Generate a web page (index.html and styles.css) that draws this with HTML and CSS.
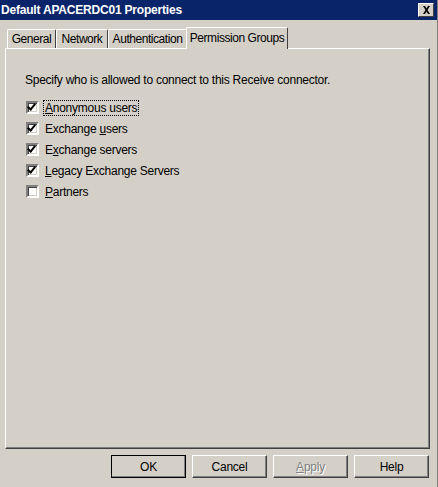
FILE: index.html
```html
<!DOCTYPE html>
<html lang="en">
<head>
  <meta charset="UTF-8">
  <title>Default APACERDC01 Properties</title>
  <link rel="stylesheet" href="styles.css">
</head>
<body>
  <div class="window">
    <div class="titlebar">
      <span class="title">Default APACERDC01 Properties</span>
      <button class="close">
        <svg width="9" height="8" viewBox="0 0 9 8"><path d="M1 0h2l1.5 2.5L6 0h2L5.5 4 8 8H6L4.5 5.5 3 8H1l2.5-4z" fill="#000"/></svg>
      </button>
    </div>

    <div class="tabs">
      <div class="tab tab-general">General</div>
      <div class="tab tab-network">Network</div>
      <div class="tab tab-auth">Authentication</div>
      <div class="tab active">Permission Groups</div>
    </div>

    <div class="panel">
      <p class="intro">Specify who is allowed to connect to this Receive connector.</p>
      <ul class="checks">
        <li><span class="box checked"></span><span class="label focus"><u>A</u>nonymous users</span></li>
        <li><span class="box checked"></span><span class="label">Exchange <u>u</u>sers</span></li>
        <li><span class="box checked"></span><span class="label">E<u>x</u>change servers</span></li>
        <li><span class="box checked"></span><span class="label"><u>L</u>egacy Exchange Servers</span></li>
        <li><span class="box"></span><span class="label"><u>P</u>artners</span></li>
      </ul>
    </div>

    <div class="buttons">
      <button class="btn default">OK</button>
      <button class="btn">Cancel</button>
      <button class="btn disabled"><u>A</u>pply</button>
      <button class="btn">Help</button>
    </div>
  </div>
</body>
</html>
```

FILE: styles.css
```css
body {
  margin: 0;
  background-color: #d4d0c8;
  font-family: "Liberation Sans", Arial, sans-serif;
  font-size: 12px;
  letter-spacing: -0.25px;
  color: #000;
}
.window {
  width: 438px;
  height: 487px;
  box-sizing: border-box;
  border-right: 1px solid #808080;
}
.titlebar {
  height: 20px;
  background-color: #0a246a;
  display: flex;
  align-items: center;
  justify-content: space-between;
  padding: 0 3px 0 1px;
}
.title {
  color: #fff;
  font-weight: bold;
  font-size: 12px;
  letter-spacing: -0.2px;
}
.close {
  width: 16px;
  height: 14px;
  padding: 0;
  background: #d4d0c8;
  border: 1px solid;
  border-color: #fff #404040 #404040 #fff;
  display: flex;
  align-items: center;
  justify-content: center;
}
.tabs {
  display: flex;
  align-items: flex-end;
  margin-top: 6px;
  padding-left: 7px;
  height: 22px;
}
.tab {
  box-sizing: border-box;
  height: 19px;
  line-height: 19px;
  text-align: center;
  border: 1px solid;
  border-color: #fff #404040 transparent #fff;
  border-bottom: none;
  border-radius: 2px 2px 0 0;
  font-size: 12px;
  letter-spacing: -0.45px;
}
.tab-general { width: 49px; }
.tab-network { width: 52px; }
.tab-auth { width: 79px; }
.tab.active {
  width: 102px;
  height: 22px;
  line-height: 20px;
  margin-left: -1px;
  position: relative;
  top: 1px;
  background: #d4d0c8;
  z-index: 1;
}
.panel {
  margin: 0 7px 0 5px;
  height: 399px;
  border: 1px solid;
  border-color: #fff #404040 #404040 #fff;
  box-shadow: inset -1px -1px 0 #808080;
  padding: 0 19px;
}
.intro {
  margin: 24px 0 10px;
}
.checks {
  list-style: none;
  margin: 0;
  padding: 0 0 0 1px;
}
.checks li {
  display: flex;
  align-items: center;
  height: 21px;
}
.box {
  width: 9px;
  height: 9px;
  background: #fff;
  border: 2px solid;
  border-color: #808080 #fff #fff #808080;
  box-shadow: inset 1px 1px 0 #404040, inset -1px -1px 0 #d4d0c8;
  margin-right: 5px;
  position: relative;
}
.box.checked::after {
  content: "";
  position: absolute;
  left: 1px;
  top: -1px;
  width: 3px;
  height: 6px;
  border: solid #000;
  border-width: 0 2px 2px 0;
  transform: rotate(40deg);
}
.label {
  padding: 0 1px;
}
.label.focus {
  outline: 1px dotted #000;
}
.buttons {
  display: flex;
  justify-content: flex-end;
  gap: 6px;
  padding: 6px 8px 0 0;
}
.btn {
  width: 75px;
  height: 23px;
  background: #d4d0c8;
  border: 1px solid;
  border-color: #fff #404040 #404040 #fff;
  box-shadow: inset -1px -1px 0 #808080;
  font-family: "Liberation Sans", Arial, sans-serif;
  font-size: 12px;
  letter-spacing: -0.25px;
  color: #000;
  padding: 0;
}
.btn.default {
  outline: 1px solid #000;
  outline-offset: -1px;
}
.btn.disabled {
  color: #808080;
  text-shadow: 1px 1px 0 #fff;
}
```
